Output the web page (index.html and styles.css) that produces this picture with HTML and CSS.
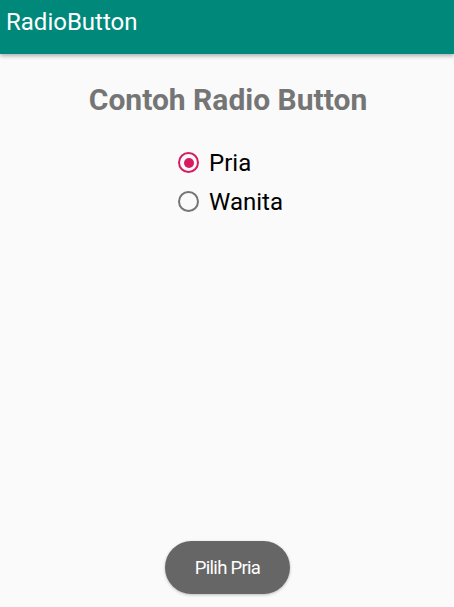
FILE: index.html
```html
<!DOCTYPE html>
<html lang="id">
<head>
  <meta charset="UTF-8">
  <meta name="viewport" content="width=device-width, initial-scale=1.0">
  <title>RadioButton</title>
  <link rel="stylesheet" href="styles.css">
</head>
<body>
  <header class="app-bar">
    <h1 class="app-title">RadioButton</h1>
  </header>

  <main class="content">
    <h2 class="heading">Contoh Radio Button</h2>
    <div class="radio-group">
      <label class="radio">
        <input type="radio" name="gender" value="Pria" checked>
        <span class="radio-mark"></span>
        <span class="radio-text">Pria</span>
      </label>
      <label class="radio">
        <input type="radio" name="gender" value="Wanita">
        <span class="radio-mark"></span>
        <span class="radio-text">Wanita</span>
      </label>
    </div>
  </main>

  <!-- Toast -->
  <div class="toast">Pilih Pria</div>
</body>
</html>
```

FILE: styles.css
```css
html, body {
  height: 100%;
}
body {
  font-family: Roboto, "Noto Sans", Arial, sans-serif;
  background-color: #fafafa;
  color: #000;
  margin: 0;
  position: relative;
  overflow: hidden;
}
.app-bar {
  height: 54px;
  background-color: #00897b;
  box-shadow: 0 2px 4px rgba(0, 0, 0, 0.3);
  display: flex;
  align-items: center;
  padding: 0 6px;
  position: relative;
  z-index: 1;
}
.app-title {
  margin: 0 0 10px;
  font-size: 24px;
  font-weight: 400;
  color: #fff;
}
.content {
  display: flex;
  flex-direction: column;
  align-items: center;
}
.heading {
  margin: 28px 0 0 2px;
  font-size: 30px;
  line-height: 36px;
  font-weight: 700;
  color: #757575;
}
.radio-group {
  display: flex;
  flex-direction: column;
  margin: 25px 0 0 7px;
}
.radio {
  display: flex;
  align-items: center;
  height: 39px;
  cursor: pointer;
}
.radio input {
  display: none;
}
.radio-mark {
  width: 17px;
  height: 17px;
  border: 2px solid #757575;
  border-radius: 50%;
  margin-right: 10px;
  display: flex;
  align-items: center;
  justify-content: center;
}
.radio input:checked + .radio-mark {
  border-color: #d81b60;
}
.radio input:checked + .radio-mark::after {
  content: "";
  width: 10px;
  height: 10px;
  border-radius: 50%;
  background: #d81b60;
}
.radio-text {
  font-size: 24px;
  color: #000;
}
.toast {
  position: absolute;
  left: 165px;
  top: 541px;
  width: 125px;
  height: 53px;
  border-radius: 27px;
  background: #666;
  color: #fff;
  font-size: 18.5px;
  letter-spacing: -0.7px;
  display: flex;
  align-items: center;
  justify-content: center;
  box-shadow: 0 1px 3px rgba(0, 0, 0, 0.25);
}
```
